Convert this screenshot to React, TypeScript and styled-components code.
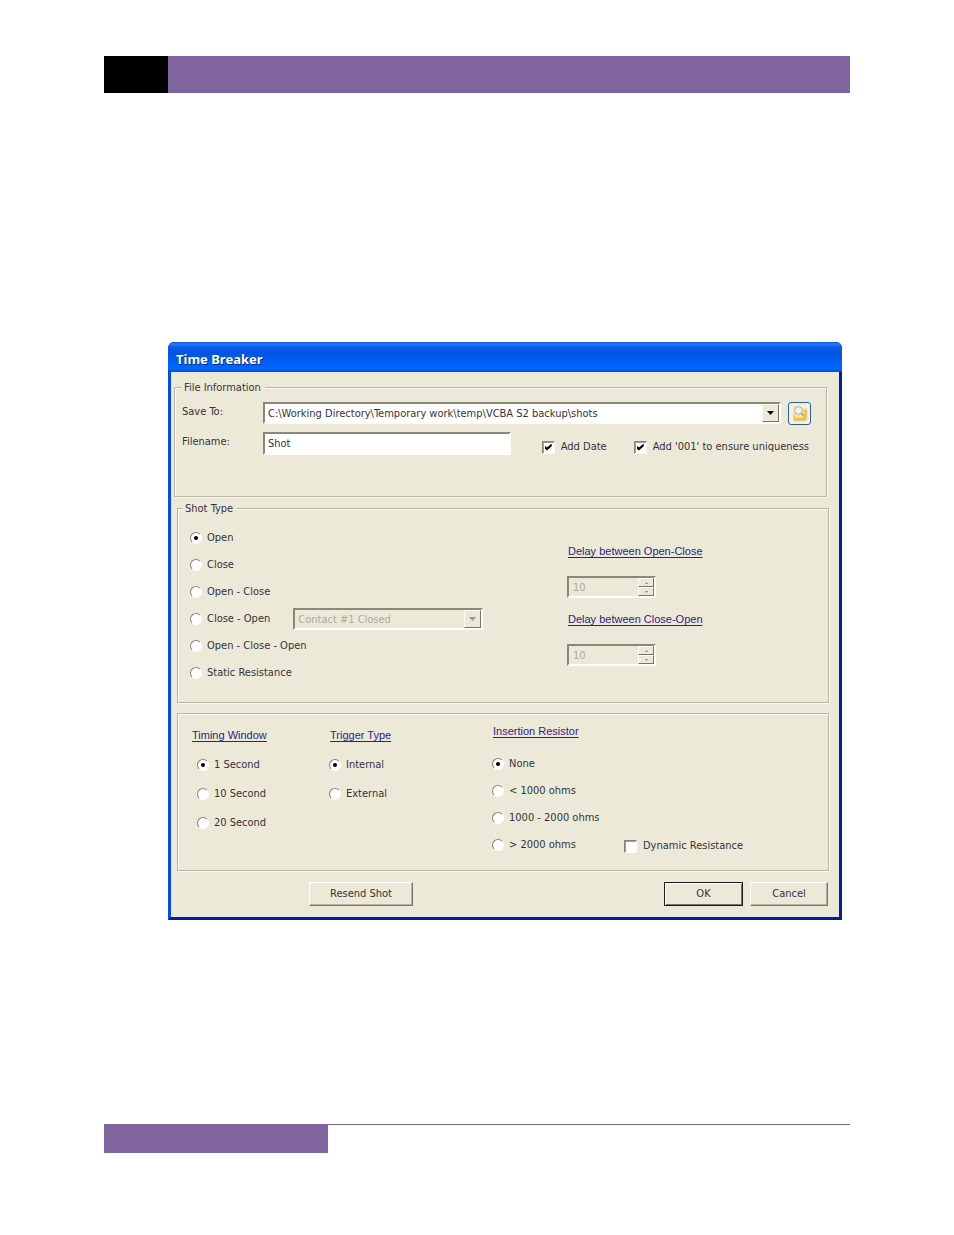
import React from "react";
import styled, { createGlobalStyle, css } from "styled-components";

const face = "#ece9d8";
const ink = "#35333a";
const purple = "#8064a0";
const uiFont = '"DejaVu Sans Condensed", "DejaVu Sans", sans-serif';

const GlobalStyle = createGlobalStyle`
  *, *::before, *::after { box-sizing: border-box; }
  body { margin: 0; background: #fff; }
`;

const Page = styled.div`
  display: flex;
  flex-direction: column;
  min-height: 100vh;
  padding: 56px 104px 82px;
  font: 11px/14px ${uiFont};
  color: ${ink};
`;

const PageHeader = styled.header`
  height: 37px;
  background: ${purple};
  border-left: 64px solid #000;
`;

const PageFooter = styled.footer`
  margin-top: auto;
  border-top: 1px solid ${purple};

  &::before {
    content: "";
    display: block;
    width: 224px;
    height: 28px;
    background: ${purple};
  }
`;

const Dialog = styled.main`
  margin: 249px 8px 80px 64px;
  border: solid;
  border-width: 0 3px 3px;
  border-color: #0831d9 #0020a8 #001ea0 #0a48e8;
  border-radius: 6px 6px 0 0;
  background: #0054e3;
`;

const TitleBar = styled.h1`
  height: 30px;
  margin: 0 -3px;
  padding: 2px 8px 0;
  border-radius: 6px 6px 0 0;
  background: linear-gradient(
    #0a4fd0 0,
    #2a80f4 2px,
    #0a5ce8 5px,
    #0054e2 12px,
    #0060fa 22px,
    #0066ff 27px,
    #0048d0 30px
  );
  color: #fff;
  font: bold 13px/30px "Noto Sans", sans-serif;
  text-shadow: 1px 1px 0 #0a2a80;
`;

const DialogBody = styled.form`
  padding: 8px 10px 11px 3px;
  background: ${face};
`;

const etched = css`
  margin: 0;
  min-width: 0;
  border: 1px solid #b9b6a8;
  box-shadow: 1px 1px 0 #fbfaf2, inset 1px 1px 0 #fbfaf2;
`;

const Group = styled.fieldset`
  ${etched}
`;

const Legend = styled.legend`
  padding: 1px 4px 0 2px;
  background: ${face};
  line-height: 13px;
`;

const FileGroup = styled(Group)`
  margin-right: 2px;
  padding: 8px 15px 30px 7px;
`;

const FileRow = styled.div`
  display: grid;
  grid-template-columns: 81px minmax(0, 1fr) auto;
  margin-bottom: 7px;
`;

const FieldLabel = styled.label`
  padding-top: 3px;
`;

const sunken = css`
  border: 2px solid;
  border-color: #8a8878 #fffef6 #fffef6 #8a8878;
  border-radius: 0;
  background: #fff;
  color: ${ink};
  font: inherit;
`;

const TextBox = styled.input`
  ${sunken}
  width: 100%;
  height: 23px;
  padding: 0 3px;
`;

const Combo = styled.div<{ $w?: string }>`
  position: relative;
  width: ${(p) => p.$w ?? "auto"};
`;

const ComboSelect = styled.select`
  ${sunken}
  appearance: none;
  display: block;
  width: 100%;
  height: 22px;
  padding: 2px 20px 0 3px;
  opacity: 1;

  &:disabled {
    background: ${face};
    color: #aeab9c;
  }
`;

const raised = css`
  border: 1px solid;
  border-color: #fffef6 #77756a #77756a #fffef6;
  background: ${face};
`;

const ComboArrow = styled.span`
  ${raised}
  position: absolute;
  top: 2px;
  right: 2px;
  display: grid;
  place-items: center;
  width: 17px;
  height: 18px;
  pointer-events: none;
`;

const BrowseButton = styled.button`
  display: grid;
  place-items: center;
  width: 23px;
  height: 23px;
  margin-left: 7px;
  padding: 0;
  border: 1px solid #2f5f9a;
  border-radius: 3px;
  background: #f4f1e4;
`;

const FileChecks = styled.div`
  display: flex;
  gap: 27px;
  margin: 0 2px 0 31px;
  padding-top: 3px;
`;

const Option = styled.label<{ $h: number }>`
  display: flex;
  align-items: center;
  gap: 5px;
  height: ${(p) => p.$h}px;
  white-space: nowrap;
`;

const Radio = styled.input.attrs({ type: "radio" })`
  appearance: none;
  flex: none;
  display: grid;
  place-items: center;
  width: 12px;
  height: 12px;
  margin: 0;
  border: 1px solid;
  border-color: #85837a #fffef6 #fffef6 #85837a;
  border-radius: 50%;
  background: #fff;

  &:checked::before {
    content: "";
    width: 4px;
    height: 4px;
    border-radius: 50%;
    background: #000;
  }
`;

const Check = styled.input.attrs({ type: "checkbox" })`
  appearance: none;
  flex: none;
  display: grid;
  place-items: center;
  width: 13px;
  height: 13px;
  margin: 0 1px 0 0;
  border: 1px solid;
  border-color: #85837a #fffef6 #fffef6 #85837a;
  background: #fff;
  box-shadow: inset 1px 1px 0 #a09e92;

  &:checked::before {
    content: "";
    width: 7px;
    height: 7px;
    background: #000;
    clip-path: polygon(0 28%, 30% 58%, 100% 0, 100% 40%, 30% 100%, 0 70%);
  }
`;

const ShotGroup = styled(Group)`
  margin: 4px 0 0 3px;
  padding: 9px 0 16px 5px;
`;

const ShotGrid = styled.div`
  display: grid;
  grid-template-columns: minmax(0, 1fr) 261px;
  padding-left: 7px;
`;

const ShotRow = styled.div`
  display: flex;
  align-items: center;
  gap: 23px;
  height: 27px;
`;

const DelayColumn = styled.div`
  padding-top: 19px;
`;

const TopicLink = styled.a<{ $gap: number }>`
  display: block;
  width: fit-content;
  margin: 0 0 ${(p) => p.$gap}px 1px;
  color: #2c2484;
  font: 11px/16px "Liberation Sans", sans-serif;
  text-underline-offset: 2px;
  white-space: nowrap;
`;

const Spinner = styled.div`
  ${sunken}
  display: grid;
  grid-template-columns: minmax(0, 1fr) 16px;
  width: 89px;
  height: 22px;
  margin-bottom: 13px;
  background: ${face};
`;

const SpinInput = styled.input`
  width: 100%;
  padding: 1px 4px 0;
  border: 0;
  background: transparent;
  color: #aeab9c;
  font: inherit;
`;

const SpinButtons = styled.div`
  display: grid;
  grid-template-rows: 1fr 1fr;
`;

const SpinButton = styled.button`
  ${raised}
  display: grid;
  place-items: center;
  min-height: 0;
  padding: 0;
`;

const SettingsGroup = styled.section`
  ${etched}
  display: grid;
  grid-template-columns: 138px 163px 132px minmax(0, 1fr);
  margin: 10px 0 11px 3px;
  padding: 9px 0 12px 13px;
`;

const SettingsColumn = styled.div<{ $top?: number }>`
  padding-top: ${(p) => p.$top ?? 0}px;
`;

const Indent = styled.div`
  padding-left: 6px;
`;

const BottomOption = styled.div`
  align-self: end;
`;

const Actions = styled.div`
  display: flex;
  gap: 7px;
  padding: 0 1px 0 135px;
`;

const PushButton = styled.button<{ $w: number; $default?: boolean }>`
  width: ${(p) => p.$w}px;
  height: 24px;
  padding: 0;
  border: 1px solid;
  border-color: ${(p) => (p.$default ? "#1c1c1c" : "#fffef6 #77756a #77756a #fffef6")};
  background: ${face};
  box-shadow: ${(p) =>
    p.$default
      ? "inset 1px 1px 0 #fffef6, inset -1px -1px 0 #77756a"
      : "inset -1px -1px 0 #b5b2a2"};
  color: ${ink};
  font: inherit;
`;

const Spacer = styled.span`
  flex: 1;
`;

const DownArrow = ({ color }: { color: string }) => (
  <svg width="7" height="4" viewBox="0 0 7 4" aria-hidden="true">
    <path d="M0 0H7L3.5 4Z" fill={color} />
  </svg>
);

const FolderSearchIcon = () => (
  <svg width="19" height="19" viewBox="0 0 19 19" aria-hidden="true">
    <path d="M3 2 10 2 12 4 16 4 17 15 15 17 4 17Z" fill="#f8e2a6" />
    <path d="M3 9 5 13 12 13 14 6 17 5 17 15 15 17 4 17Z" fill="#efc055" />
    <path d="M5 13 12 13 14 8" fill="none" stroke="#fff3cf" />
    <circle cx="8.5" cy="6.5" r="3.8" fill="#f0f2f2" stroke="#b0ada2" />
    <path d="M11.3 9.3 13.5 11.5" stroke="#9a917c" strokeWidth="1.6" />
  </svg>
);

const RadioOption = ({ name, label, h, on }: { name: string; label: string; h: number; on?: boolean }) => (
  <Option $h={h}>
    <Radio name={name} defaultChecked={on} />
    {label}
  </Option>
);

const CheckOption = ({ label, h, on }: { label: string; h: number; on?: boolean }) => (
  <Option $h={h}>
    <Check defaultChecked={on} />
    {label}
  </Option>
);

const DelayField = ({ label }: { label: string }) => (
  <>
    <TopicLink href="#delay" $gap={17}>{label}</TopicLink>
    <Spinner>
      <SpinInput type="text" inputMode="numeric" defaultValue="10" aria-label={label} disabled />
      <SpinButtons>
        <SpinButton type="button" aria-label="Increase" disabled>
          <svg width="3" height="2" viewBox="0 0 3 2"><path d="M0 2 1.5 0 3 2Z" fill="#8a8878" /></svg>
        </SpinButton>
        <SpinButton type="button" aria-label="Decrease" disabled>
          <svg width="3" height="2" viewBox="0 0 3 2"><path d="M0 0 1.5 2 3 0Z" fill="#8a8878" /></svg>
        </SpinButton>
      </SpinButtons>
    </Spinner>
  </>
);

const shotTypes = ["Open", "Close", "Open - Close", "Close - Open", "Open - Close - Open", "Static Resistance"];
const timings = ["1 Second", "10 Second", "20 Second"];
const triggers = ["Internal", "External"];
const resistors = ["None", "< 1000 ohms", "1000 - 2000 ohms", "> 2000 ohms"];

export default function App() {
  return (
    <>
      <GlobalStyle />
      <Page>
        <PageHeader />
        <Dialog>
          <TitleBar>Time Breaker</TitleBar>
          <DialogBody onSubmit={(e) => e.preventDefault()}>
            <FileGroup>
              <Legend>File Information</Legend>
              <FileRow>
                <FieldLabel htmlFor="save-to">Save To:</FieldLabel>
                <Combo>
                  <ComboSelect id="save-to">
                    <option>C:\Working Directory\Temporary work\temp\VCBA S2 backup\shots</option>
                  </ComboSelect>
                  <ComboArrow><DownArrow color="#000" /></ComboArrow>
                </Combo>
                <BrowseButton type="button" aria-label="Browse folders">
                  <FolderSearchIcon />
                </BrowseButton>
              </FileRow>
              <FileRow>
                <FieldLabel htmlFor="filename">Filename:</FieldLabel>
                <TextBox id="filename" defaultValue="Shot" />
                <FileChecks>
                  <CheckOption label="Add Date" h={24} on />
                  <CheckOption label="Add '001' to ensure uniqueness" h={24} on />
                </FileChecks>
              </FileRow>
            </FileGroup>

            <ShotGroup>
              <Legend>Shot Type</Legend>
              <ShotGrid>
                <div>
                  {shotTypes.map((type, i) => (
                    <ShotRow key={type}>
                      <RadioOption name="shot" label={type} h={27} on={i === 0} />
                      {type === "Close - Open" && (
                        <Combo $w="190px">
                          <ComboSelect aria-label="Contact state" disabled>
                            <option>Contact #1 Closed</option>
                          </ComboSelect>
                          <ComboArrow><DownArrow color="#9a988a" /></ComboArrow>
                        </Combo>
                      )}
                    </ShotRow>
                  ))}
                </div>
                <DelayColumn>
                  <DelayField label="Delay between Open-Close" />
                  <DelayField label="Delay between Close-Open" />
                </DelayColumn>
              </ShotGrid>
            </ShotGroup>

            <SettingsGroup>
              <SettingsColumn $top={4}>
                <TopicLink href="#timing" $gap={7}>Timing Window</TopicLink>
                <Indent>
                  {timings.map((t, i) => <RadioOption key={t} name="timing" label={t} h={29} on={i === 0} />)}
                </Indent>
              </SettingsColumn>
              <SettingsColumn $top={4}>
                <TopicLink href="#trigger" $gap={7}>Trigger Type</TopicLink>
                {triggers.map((t, i) => <RadioOption key={t} name="trigger" label={t} h={29} on={i === 0} />)}
              </SettingsColumn>
              <SettingsColumn>
                <TopicLink href="#resistor" $gap={11}>Insertion Resistor</TopicLink>
                {resistors.map((r, i) => <RadioOption key={r} name="resistor" label={r} h={27} on={i === 0} />)}
              </SettingsColumn>
              <BottomOption>
                <CheckOption label="Dynamic Resistance" h={24} />
              </BottomOption>
            </SettingsGroup>

            <Actions>
              <PushButton type="button" $w={104}>Resend Shot</PushButton>
              <Spacer />
              <PushButton type="submit" $w={79} $default>OK</PushButton>
              <PushButton type="button" $w={78}>Cancel</PushButton>
            </Actions>
          </DialogBody>
        </Dialog>
        <PageFooter />
      </Page>
    </>
  );
}
